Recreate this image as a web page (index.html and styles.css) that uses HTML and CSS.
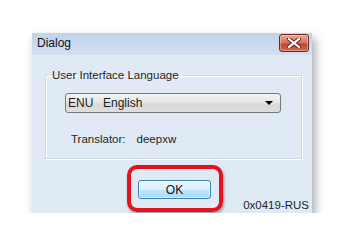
FILE: index.html
```html
<!DOCTYPE html>
<html lang="en">
<head>
    <meta charset="UTF-8">
    <meta name="viewport" content="width=device-width, initial-scale=1.0">
    <title>Dialog</title>
    <link rel="stylesheet" href="styles.css">
</head>
<body>
    <div class="dialog">
        <div class="titlebar">
            <span class="title">Dialog</span>
            <button class="close" aria-label="Close">
                <svg width="14" height="10" viewBox="0 0 14 10">
                    <path d="M2 1 L12 9 M12 1 L2 9" stroke="#5a2018" stroke-width="4" stroke-linecap="square"/>
                    <path d="M2 1 L12 9 M12 1 L2 9" stroke="#fff" stroke-width="2.2" stroke-linecap="square"/>
                </svg>
            </button>
        </div>

        <div class="content">
            <fieldset class="group">
                <legend>User Interface Language</legend>
                <div class="combo">
                    <span class="code">ENU</span>
                    <span class="lang">English</span>
                    <span class="arrow"></span>
                </div>
                <div class="translator">
                    <span>Translator:</span>
                    <span>deepxw</span>
                </div>
            </fieldset>

            <div class="footer">
                <span class="highlight">
                    <button class="ok">OK</button>
                </span>
                <span class="locale">0x0419-RUS</span>
            </div>
        </div>
    </div>
</body>
</html>
```

FILE: styles.css
```css
body {
    margin: 0;
    padding: 33px 0 0 32px;
    background-color: #fff;
    font-family: 'Liberation Sans', Arial, sans-serif;
    font-size: 11.5px;
    color: #1e1e1e;
}
.dialog {
    width: 280px;
    height: 180px;
    background-color: #e0eaf5;
    box-shadow: 3px 5px 9px rgba(0, 0, 0, 0.35);
    display: flex;
    flex-direction: column;
}
.titlebar {
    height: 22px;
    display: flex;
    justify-content: space-between;
    align-items: flex-start;
    background: linear-gradient(#c2d3e8, #d2dff0);
    padding: 0 3px 0 5px;
}
.title {
    font-size: 12px;
    line-height: 20px;
    color: #111;
}
.close {
    width: 30px;
    height: 18px;
    margin-top: 1px;
    padding: 0;
    border: 1px solid #6b2a20;
    border-radius: 3px;
    background: linear-gradient(#e9a796, #d5705b 50%, #c3432c 55%, #d2674c);
    display: flex;
    align-items: center;
    justify-content: center;
    box-shadow: inset 0 0 0 1px rgba(255, 255, 255, 0.35);
}
.content {
    flex: 1;
    display: flex;
    flex-direction: column;
    padding: 0 10px 1px 13px;
}
.group {
    margin: 14px 0 0 0;
    padding: 12px 20px 0 19px;
    height: 76px;
    border: 1px solid #cfd9e3;
    box-shadow: inset 1px 1px 0 #fff, 1px 1px 0 #fff;
}
.group legend {
    padding: 0 3px;
    margin-left: -16px;
}
.combo {
    height: 18px;
    display: flex;
    align-items: center;
    border: 1px solid #7a7a7a;
    border-radius: 3px;
    background: linear-gradient(#f3f3f3, #e5e5e5 50%, #d9d9d9 55%, #dedede);
    padding: 0 7px 0 2px;
    font-size: 12px;
}
.code {
    width: 35px;
}
.lang {
    flex: 1;
}
.arrow {
    width: 0;
    height: 0;
    border-left: 4px solid transparent;
    border-right: 4px solid transparent;
    border-top: 4px solid #000;
}
.translator {
    margin: 20px 0 0 6px;
    display: flex;
    gap: 11px;
}
.footer {
    display: flex;
    align-items: flex-end;
    margin-top: auto;
}
.highlight {
    padding: 11px 8px 9px 7px;
    border: 4px solid #e3121d;
    border-radius: 10px;
    box-shadow: 1px 2px 3px rgba(0, 0, 0, 0.35);
    margin-left: 82px;
    display: flex;
}
.ok {
    width: 73px;
    height: 19px;
    padding: 0;
    border: 1px solid #3c7fb1;
    border-radius: 3px;
    background: linear-gradient(#eaf6fd, #d9f0fc 50%, #bee6fd 55%, #a7d9f5);
    box-shadow: inset 0 0 0 1px rgba(255, 255, 255, 0.6);
    font-family: inherit;
    font-size: 12px;
    color: #111;
}
.locale {
    margin-left: auto;
    margin-right: -7px;
    line-height: 14px;
    white-space: nowrap;
}
```
